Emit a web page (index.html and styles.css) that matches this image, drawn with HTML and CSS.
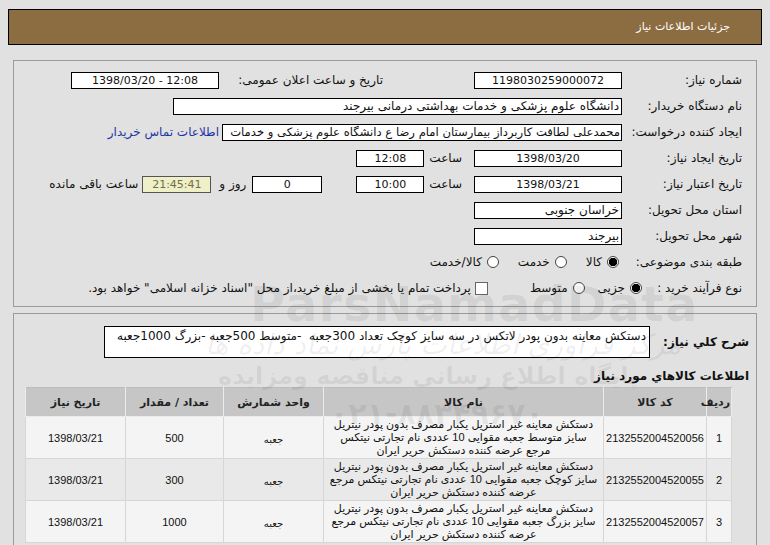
FILE: index.html
```html
<!DOCTYPE html>
<html lang="fa" dir="rtl">
<head>
<meta charset="utf-8">
<title>جزئیات اطلاعات نیاز</title>
<link rel="stylesheet" href="styles.css">
</head>
<body>
<div class="titlebar">جزئیات اطلاعات نیاز</div>

<div class="panel p1">
  <div class="row">
    <span class="lbl">شماره نیاز:</span>
    <span class="box num w148 c">1198030259000072</span>
    <span class="lbl2">تاریخ و ساعت اعلان عمومی:</span>
    <span class="box num w148 c" dir="ltr">1398/03/20 - 12:08</span>
  </div>
  <div class="row">
    <span class="lbl">نام دستگاه خریدار:</span>
    <span class="box w449">دانشگاه علوم پزشکی و خدمات بهداشتی درمانی بیرجند</span>
  </div>
  <div class="row">
    <span class="lbl">ایجاد کننده درخواست:</span>
    <span class="box w400 tight">محمدعلی لطافت کاربرداز بیمارستان امام رضا ع دانشگاه علوم پزشکی و خدمات</span>
    <a class="link" href="#">اطلاعات تماس خریدار</a>
  </div>
  <div class="row">
    <span class="lbl">تاریخ ایجاد نیاز:</span>
    <span class="box num w148 c">1398/03/20</span>
    <span class="txt t-sa">ساعت</span>
    <span class="box num w68 c">12:08</span>
  </div>
  <div class="row">
    <span class="lbl">تاریخ اعتبار نیاز:</span>
    <span class="box num w148 c">1398/03/21</span>
    <span class="txt t-sa">ساعت</span>
    <span class="box num w68 c">10:00</span>
    <span class="box num w70 c g-day">0</span>
    <span class="txt t-ruz">روز و</span>
    <span class="box num w69 c remain">21:45:41</span>
    <span class="txt t-rem">ساعت باقی مانده</span>
  </div>
  <div class="row">
    <span class="lbl">استان محل تحویل:</span>
    <span class="box w148">خراسان جنوبی</span>
  </div>
  <div class="row">
    <span class="lbl">شهر محل تحویل:</span>
    <span class="box w148">بیرجند</span>
  </div>
  <div class="row r-cat">
    <span class="lbl lbl-cat">طبقه بندی موضوعی:</span>
    <span class="radio on"></span><span class="opt">کالا</span>
    <span class="radio"></span><span class="opt">خدمت</span>
    <span class="radio"></span><span class="opt">کالا/خدمت</span>
  </div>
  <div class="row r-proc">
    <span class="lbl lbl-proc">نوع فرآیند خرید :</span>
    <span class="radio on"></span><span class="opt">جزیی</span>
    <span class="radio"></span><span class="opt">متوسط</span>
    <span class="check"></span><span class="opt">پرداخت تمام یا بخشی از مبلغ خرید،از محل "اسناد خزانه اسلامی" خواهد بود.</span>
  </div>
</div>

<div class="panel p2">
  <div class="descrow">
    <span class="blbl">شرح کلي نياز:</span>
    <div class="descbox">دستکش معاینه بدون پودر لاتکس در سه سایز کوچک تعداد 300جعبه &nbsp;-متوسط 500جعبه -بزرگ 1000جعبه</div>
  </div>
  <div class="btitle">اطلاعات کالاهاي مورد نياز</div>
  <table class="items">
    <thead>
      <tr>
        <th class="c-n">ردیف</th>
        <th class="c-code">کد کالا</th>
        <th class="c-name">نام کالا</th>
        <th class="c-unit">واحد شمارش</th>
        <th class="c-qty">تعداد / مقدار</th>
        <th class="c-date">تاریخ نیاز</th>
      </tr>
    </thead>
    <tbody>
      <tr class="odd">
        <td>1</td>
        <td>2132552004520056</td>
        <td class="name">دستکش معاینه غیر استریل یکبار مصرف بدون پودر نیتریل<br>سایز متوسط جعبه مقوایی 10 عددی نام تجارتی نیتکس<br>مرجع عرضه کننده دستکش حریر ایران</td>
        <td class="unit">جعبه</td>
        <td>500</td>
        <td>1398/03/21</td>
      </tr>
      <tr class="even">
        <td>2</td>
        <td>2132552004520055</td>
        <td class="name">دستکش معاینه غیر استریل یکبار مصرف بدون پودر نیتریل<br>سایز کوچک جعبه مقوایی 10 عددی نام تجارتی نیتکس مرجع<br>عرضه کننده دستکش حریر ایران</td>
        <td class="unit">جعبه</td>
        <td>300</td>
        <td>1398/03/21</td>
      </tr>
      <tr class="odd">
        <td>3</td>
        <td>2132552004520057</td>
        <td class="name">دستکش معاینه غیر استریل یکبار مصرف بدون پودر نیتریل<br>سایز بزرگ جعبه مقوایی 10 عددی نام تجارتی نیتکس مرجع<br>عرضه کننده دستکش حریر ایران</td>
        <td class="unit">جعبه</td>
        <td>1000</td>
        <td>1398/03/21</td>
      </tr>
    </tbody>
  </table>
</div>

<div class="wm wm-latin" dir="ltr">ParsNamadData</div>
<div class="wm wm-fa1">مرکز فراوری اطلاعات پارس نماد داده ها</div>
<div class="wm wm-fa2">پایگاه اطلاع رسانی مناقصه ومزایده</div>
<div class="wm wm-tel" dir="ltr">۰۲۱-۸۸۳۴۹۶۷۰</div>
</body>
</html>
```

FILE: styles.css
```css
* { box-sizing: border-box; }
html, body { margin: 0; padding: 0; }
body {
  background: #e1e1e1;
  font-family: "DejaVu Sans", "Liberation Sans", sans-serif;
  font-size: 12px;
  color: #111;
  direction: rtl;
  width: 770px;
  height: 545px;
  overflow: hidden;
  position: relative;
}

.titlebar {
  margin: 9px 8px 0 8px;
  height: 36px;
  background: #8c6d41;
  border: 1px solid #000;
  color: #fff;
  font-size: 11px;
  line-height: 34px;
  padding-right: 31px;
}

.panel {
  margin: 0 13px 0 13px;
  border: 1px solid #9a9a9a;
}
.p1 {
  margin-top: 15px;
  height: 247px;
  padding: 6px 14px 0 0;
}
.p2 {
  margin-top: 6px;
  height: 260px;
  padding: 12px 7px 0 0;
}

.row {
  display: flex;
  align-items: center;
  height: 26px;
  white-space: nowrap;
}
.lbl {
  width: 120px;
  flex: none;
}
.lbl.lbl-cat { width: 123px; }
.lbl.lbl-proc { width: 100px; }
.lbl2 { width: 160px; flex: none; margin-right: 91px; margin-left: 4px; }

.box {
  display: inline-block;
  height: 17px;
  line-height: 15px;
  background: #fff;
  border: 1px solid #000;
  padding: 0 2px;
  flex: none;
  overflow: hidden;
  white-space: nowrap;
}
.box.num { font-size: 11px; }
.box.c { text-align: center; }
.box.tight { font-size: 11.6px; padding: 0 1px; }
.w148 { width: 148px; }
.w449 { width: 449px; }
.w400 { width: 400px; }
.w68 { width: 68px; }
.w70 { width: 70px; }
.w69 { width: 69px; }

.link { color: #1f35a6; text-decoration: none; margin-right: 3px; }

.txt { flex: none; }
.t-sa { margin-right: 12px; margin-left: 5px; }
.g-day { margin-right: 34px; }
.t-ruz { margin-right: 6px; margin-left: 8px; }
.remain { background: #efefc8; color: #707048; border-color: #555; }
.t-rem { margin-right: 4px; }

.radio {
  width: 12px;
  height: 12px;
  border-radius: 50%;
  border: 1px solid #444;
  background: #fff;
  flex: none;
  margin-left: 5px;
}
.r-cat .radio { margin-right: 19px; }
.r-proc .radio { margin-right: 13px; }
.row .lbl + .radio { margin-right: 0; }
.radio.on { background: radial-gradient(circle, #000 0 4px, #fff 4.5px); }
.opt { flex: none; }
.check {
  width: 13px;
  height: 13px;
  border: 1px solid #666;
  background: #fff;
  flex: none;
  margin-right: 42px;
  margin-left: 4px;
}

.descrow {
  display: flex;
  align-items: center;
  height: 32px;
}
.blbl, .btitle {
  font-weight: bold;
  font-size: 12px;
}
.blbl { width: 99px; flex: none; }
.descbox {
  width: 546px;
  height: 32px;
  background: #fff;
  border: 1px solid #000;
  padding: 2px 3px;
  line-height: 14px;
  white-space: nowrap;
  overflow: hidden;
}
.btitle { margin-top: 11px; line-height: 14px; }

.items {
  margin-top: 4px;
  margin-right: 17px;
  width: 706px;
  border-collapse: collapse;
  table-layout: fixed;
  font-family: "Liberation Sans", "DejaVu Sans", sans-serif;
  font-size: 11px;
}
.items th {
  background: #c6c6c6;
  height: 29px;
  font-family: "DejaVu Sans", sans-serif;
  font-weight: bold;
  font-size: 11px;
  color: #222;
  border: 1px solid #ececec;
  border-top: 1px solid #bdbdbd;
}
.items td {
  height: 42px;
  text-align: center;
  border: 1px solid #d6d6d6;
  border-top: 0;
  padding: 0;
}
.items td.name { line-height: 13px; }
.items td.unit { padding-top: 4px; font-size: 10px; }
.items tr.odd td { background: #f4f4f4; }
.items tr.even td { background: #e9e9e9; }
.c-n { width: 25px; }
.c-code { width: 103px; }
.c-name { width: 280px; }
.c-unit { width: 100px; }
.c-qty { width: 98px; }
.c-date { width: 100px; }

.wm {
  position: absolute;
  pointer-events: none;
  color: rgba(0, 0, 0, 0.065);
  white-space: nowrap;
}
.wm-latin {
  left: 250px;
  top: 276px;
  font-family: "DejaVu Sans", sans-serif;
  font-weight: bold;
  font-size: 48px;
  letter-spacing: 1px;
}
.wm-fa1 {
  left: 205px;
  top: 328px;
  font-size: 28px;
  font-style: italic;
}
.wm-fa2 {
  left: 218px;
  top: 362px;
  font-size: 24px;
  font-weight: bold;
}
.wm-tel {
  left: 330px;
  top: 396px;
  font-size: 30px;
  font-weight: bold;
}
```
